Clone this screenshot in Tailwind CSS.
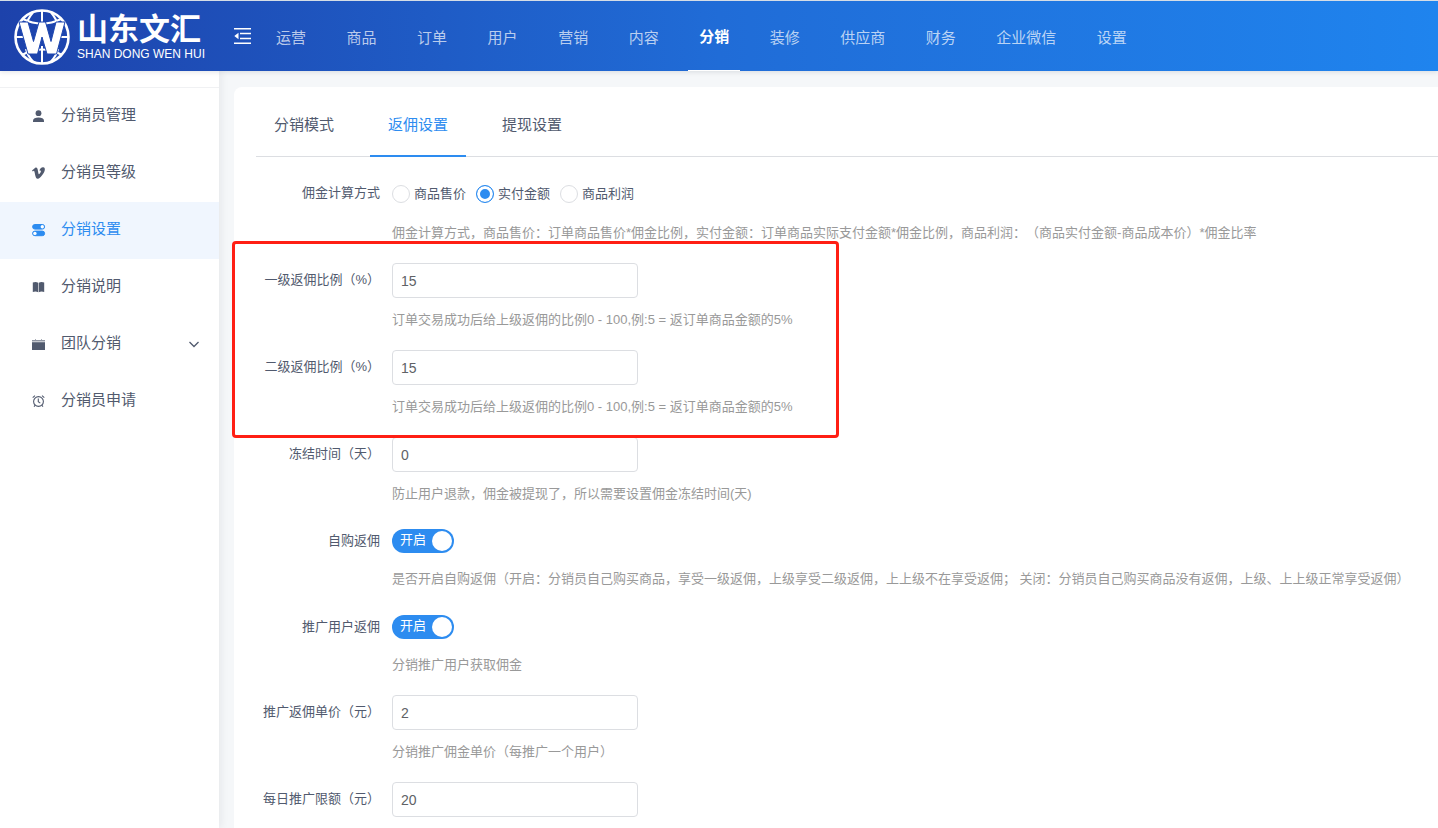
<!DOCTYPE html>
<html lang="zh-CN">
<head>
<meta charset="utf-8">
<title>分销设置</title>
<script src="https://cdn.jsdelivr.net/npm/@tailwindcss/browser@4"></script>
</head>
<body class="font-['Liberation_Sans','Noto_Sans_CJK_SC',sans-serif] bg-[#f5f7f9] text-[#515a6e] [text-spacing-trim:space-all]">
<div class="flex h-screen flex-col overflow-hidden">

  <header class="relative z-20 flex h-[71px] shrink-0 items-stretch border-t border-[#d5dde6] bg-linear-to-r from-[#1d42ab] via-[#206cd7] to-[#1f84ee] shadow-[0_1px_5px_rgba(0,21,41,0.12)]">
    <a href="#" class="flex w-[234px] shrink-0 items-center gap-1.5 pt-0.5 pl-[13px] text-white">
      <svg class="size-[58px] shrink-0" viewBox="0 0 58 58" fill="none" stroke="#fff" aria-hidden="true">
        <circle cx="29" cy="29" r="26.5" stroke-width="2.6"/>
        <path d="M29 3v12M29 38v17M3 29h10M45 29h10" stroke-width="2"/>
        <path d="M20 4.500C16 9 14 13 12.500 19M38 4.500C42 9 44 13 45.500 19M20 53.500C16 49 14 46 13 41M38 53.500C42 49 44 46 45 41" stroke-width="2"/>
        <path d="M10 11C22 17 36 17 48 11M9 47C22 40 36 40 49 47" stroke-width="2"/>
        <path d="M6 14h9l5.500 19.500L26 14h6.500L38 33.500 43 14h9L43.500 46H34l-5-17-4.500 17H15z" fill="#fff" stroke="#1e47b0" stroke-width="1"/>
      </svg>
      <span class="flex flex-col whitespace-nowrap">
        <span class="text-[31px] leading-[34px] font-bold">山东文汇</span>
        <span class="text-xs leading-[14px]">SHAN DONG WEN HUI</span>
      </span>
    </a>
    <div class="flex w-[42px] shrink-0 items-center">
      <button type="button" aria-label="收起菜单">
        <svg class="block size-[18px]" viewBox="0 0 18 18" fill="none" stroke="#fff" stroke-width="1.500">
          <path d="M0 1.700h17M6 6.600h11M6 11.400h11M0 16.300h17"/><path d="M4.500 5.800v6.400L.300 9z" fill="#fff" stroke="none"/>
        </svg>
      </button>
    </div>
    <nav class="flex w-full max-w-[851px] justify-between text-[15px] whitespace-nowrap text-white/70 *:flex *:items-center *:pt-1">
      <a href="#">运营</a><a href="#">商品</a><a href="#">订单</a><a href="#">用户</a><a href="#">营销</a><a href="#">内容</a>
      <a href="#" class="-mx-[11px] border-b border-white px-[11px] font-bold text-white" aria-current="page">分销</a>
      <a href="#">装修</a><a href="#">供应商</a><a href="#">财务</a><a href="#">企业微信</a><a href="#">设置</a>
    </nav>
  </header>

  <div class="flex min-h-0 flex-1">
    <aside class="relative z-10 w-[219px] shrink-0 bg-white pt-4 shadow-[2px_0_8px_rgba(29,35,41,0.07)]">
      <nav class="border-t border-[#f0f1f3] text-[15px] *:flex *:h-[57px] *:items-center *:gap-[15px] *:pr-[19px] *:pb-0.5 *:pl-8">
        <a href="#">
          <svg class="size-[14px]" viewBox="0 0 14 14" fill="currentColor"><circle cx="6.500" cy="4.200" r="2.900"/><path d="M1 13v-1.500C1 9.500 3.500 8.500 6.500 8.500s5.500 1 5.500 3V13z"/></svg>
          <span>分销员管理</span>
        </a>
        <a href="#">
          <svg class="size-[14px]" viewBox="0 0 14 14" fill="currentColor"><path d="M0 4.500 3 1.900C4.700.700 5.500 2.200 5.800 4c.400 2.200.700 4.300 1.200 4.300.600 0 2-2.200 1.900-3.200-.100-.900-.900-.700-1.500-.400C8 2.500 9.300 1.100 11.100 1.200c1.700.100 2 1.500 1.600 3.200-.700 3-4.500 7.800-6.700 8.300-1.700.300-2.300-1.300-2.800-3.400C2.700 7 2.500 4.900 1.900 4.800c-.300 0-.700.300-1.100.600z"/></svg>
          <span>分销员等级</span>
        </a>
        <a href="#" class="bg-[#f0f6fe] text-[#2d8cf0]" aria-current="page">
          <svg class="size-[14px]" viewBox="0 0 14 14" fill="none" stroke="currentColor"><rect x=".600" y="1.500" width="12" height="4.600" rx="2.300" fill="currentColor"/><circle cx="10.300" cy="3.800" r="1.700" fill="#fff" stroke="none"/><rect x=".600" y="8.100" width="12" height="4.600" rx="2.300" fill="currentColor"/><circle cx="2.900" cy="10.400" r="1.700" fill="#fff" stroke="none"/></svg>
          <span>分销设置</span>
        </a>
        <a href="#">
          <svg class="size-[14px]" viewBox="0 0 14 14" fill="currentColor"><path d="M.800 2.600C2.500 1.800 4.500 1.800 6.200 2.700v9.600c-1.600-1-3.600-1-5.400-.300zM6.800 2.700c1.700-.900 3.700-.900 5.400-.100V12c-1.800-.700-3.800-.700-5.400.300z"/></svg>
          <span>分销说明</span>
        </a>
        <a href="#">
          <svg class="size-[14px]" viewBox="0 0 14 14" fill="currentColor"><path d="M0 5.200h13V13H0z"/><path d="M0 3h3v-.800h1V3h5v-.800h1V3h3v1.600H0z" opacity=".65"/></svg>
          <span>团队分销</span>
          <svg class="ml-auto size-[12px]" viewBox="0 0 12 12" fill="none" stroke="currentColor" stroke-width="1.300"><path d="m1.500 4 4.500 4.500L10.500 4"/></svg>
        </a>
        <a href="#">
          <svg class="size-[14px]" viewBox="0 0 14 14" fill="none" stroke="currentColor" stroke-width="1.100"><circle cx="6.500" cy="7.500" r="4.900"/><path d="M6.300 4.500v3.300l2 1.300M.700 3.600 3 1.700M12.300 3.600 10 1.700M3.300 11.200l-1.300 1.400M9.700 11.200l1.300 1.400"/></svg>
          <span>分销员申请</span>
        </a>
      </nav>
    </aside>

    <main class="relative flex min-w-0 flex-1 flex-col pt-4 pl-[15px]">
      <section class="flex-1 rounded-tl-lg bg-white pl-[22px]">
        <div role="tablist" class="flex gap-[18px] border-b border-[#dcdee2] text-[15px]">
          <button type="button" role="tab" aria-selected="false" class="-mb-px h-[70px] border-b-2 border-transparent px-[18px] pt-2">分销模式</button>
          <button type="button" role="tab" aria-selected="true" class="-mb-px h-[70px] border-b-2 border-[#2d8cf0] px-[18px] pt-2 text-[#2d8cf0]">返佣设置</button>
          <button type="button" role="tab" aria-selected="false" class="-mb-px h-[70px] border-b-2 border-transparent px-[18px] pt-2">提现设置</button>
        </div>

        <form class="pt-[19px] text-[13px] leading-5 whitespace-nowrap">
          <fieldset class="flex gap-3" aria-labelledby="calc">
            <div id="calc" class="flex h-[33px] w-[124px] shrink-0 items-center justify-end">佣金计算方式</div>
            <div class="pb-5">
              <div class="flex h-[35px] items-center gap-2.5">
                <label class="flex items-center gap-1"><input type="radio" name="calc" class="size-[18px] appearance-none rounded-full border border-[#dcdee2] checked:border-[#2d8cf0] checked:bg-[#2d8cf0] checked:inset-ring-3 checked:inset-ring-white">商品售价</label>
                <label class="flex items-center gap-1"><input type="radio" name="calc" checked class="size-[18px] appearance-none rounded-full border border-[#dcdee2] checked:border-[#2d8cf0] checked:bg-[#2d8cf0] checked:inset-ring-3 checked:inset-ring-white">实付金额</label>
                <label class="flex items-center gap-1"><input type="radio" name="calc" class="size-[18px] appearance-none rounded-full border border-[#dcdee2] checked:border-[#2d8cf0] checked:bg-[#2d8cf0] checked:inset-ring-3 checked:inset-ring-white">商品利润</label>
              </div>
              <p class="mt-3 text-[#999]">佣金计算方式，商品售价：订单商品售价*佣金比例，实付金额：订单商品实际支付金额*佣金比例，商品利润：（商品实付金额-商品成本价）*佣金比率</p>
            </div>
          </fieldset>

          <div class="flex gap-3">
            <label for="rate1" class="flex h-[33px] w-[124px] shrink-0 items-center justify-end">一级返佣比例（%）</label>
            <div class="pb-5">
              <input id="rate1" type="text" value="15" class="block h-[35px] w-[246px] rounded border border-[#dcdee2] bg-white px-2 text-sm text-[#606266]">
              <p class="mt-3 text-[#999]">订单交易成功后给上级返佣的比例0 - 100,例:5 = 返订单商品金额的5%</p>
            </div>
          </div>

          <div class="flex gap-3">
            <label for="rate2" class="flex h-[33px] w-[124px] shrink-0 items-center justify-end">二级返佣比例（%）</label>
            <div class="pb-5">
              <input id="rate2" type="text" value="15" class="block h-[35px] w-[246px] rounded border border-[#dcdee2] bg-white px-2 text-sm text-[#606266]">
              <p class="mt-3 text-[#999]">订单交易成功后给上级返佣的比例0 - 100,例:5 = 返订单商品金额的5%</p>
            </div>
          </div>

          <div class="flex gap-3">
            <label for="freeze" class="flex h-[33px] w-[124px] shrink-0 items-center justify-end">冻结时间（天）</label>
            <div class="pb-5">
              <input id="freeze" type="text" value="0" class="block h-[35px] w-[246px] rounded border border-[#dcdee2] bg-white px-2 text-sm text-[#606266]">
              <p class="mt-3 text-[#999]">防止用户退款，佣金被提现了，所以需要设置佣金冻结时间(天)</p>
            </div>
          </div>

          <div class="flex gap-3">
            <label for="self" class="flex h-[33px] w-[124px] shrink-0 items-center justify-end">自购返佣</label>
            <div class="pb-[21px]">
              <div class="flex h-[33px] items-center">
                <label class="relative flex h-6 w-[62px] items-center rounded-full bg-[#2d8cf0] pb-0.5 pl-2 text-white">
                  <input id="self" type="checkbox" role="switch" checked class="absolute inset-0 appearance-none rounded-full">开启
                  <span class="absolute top-0.5 right-0.5 size-5 rounded-full bg-white"></span>
                </label>
              </div>
              <p class="mt-3 text-[#999]">是否开启自购返佣（开启：分销员自己购买商品，享受一级返佣，上级享受二级返佣，上上级不在享受返佣； 关闭：分销员自己购买商品没有返佣，上级、上上级正常享受返佣）</p>
            </div>
          </div>

          <div class="flex gap-3">
            <label for="promo" class="flex h-[33px] w-[124px] shrink-0 items-center justify-end">推广用户返佣</label>
            <div class="pb-5">
              <div class="flex h-[33px] items-center">
                <label class="relative flex h-6 w-[62px] items-center rounded-full bg-[#2d8cf0] pb-0.5 pl-2 text-white">
                  <input id="promo" type="checkbox" role="switch" checked class="absolute inset-0 appearance-none rounded-full">开启
                  <span class="absolute top-0.5 right-0.5 size-5 rounded-full bg-white"></span>
                </label>
              </div>
              <p class="mt-3 text-[#999]">分销推广用户获取佣金</p>
            </div>
          </div>

          <div class="flex gap-3">
            <label for="price" class="flex h-[33px] w-[124px] shrink-0 items-center justify-end">推广返佣单价（元）</label>
            <div class="pb-5">
              <input id="price" type="text" value="2" class="block h-[35px] w-[246px] rounded border border-[#dcdee2] bg-white px-2 text-sm text-[#606266]">
              <p class="mt-3 text-[#999]">分销推广佣金单价（每推广一个用户）</p>
            </div>
          </div>

          <div class="flex gap-3">
            <label for="limit" class="flex h-[33px] w-[124px] shrink-0 items-center justify-end">每日推广限额（元）</label>
            <div>
              <input id="limit" type="text" value="20" class="block h-[35px] w-[246px] rounded border border-[#dcdee2] bg-white px-2 text-sm text-[#606266]">
            </div>
          </div>
        </form>
      </section>

      <!-- highlight frame over the two commission-rate rows -->
      <div class="pointer-events-none absolute top-[170px] left-[13px] z-20 h-[197px] w-[607px] rounded border-3 border-[#ff1f14]"></div>
    </main>
  </div>
</div>
</body>
</html>
